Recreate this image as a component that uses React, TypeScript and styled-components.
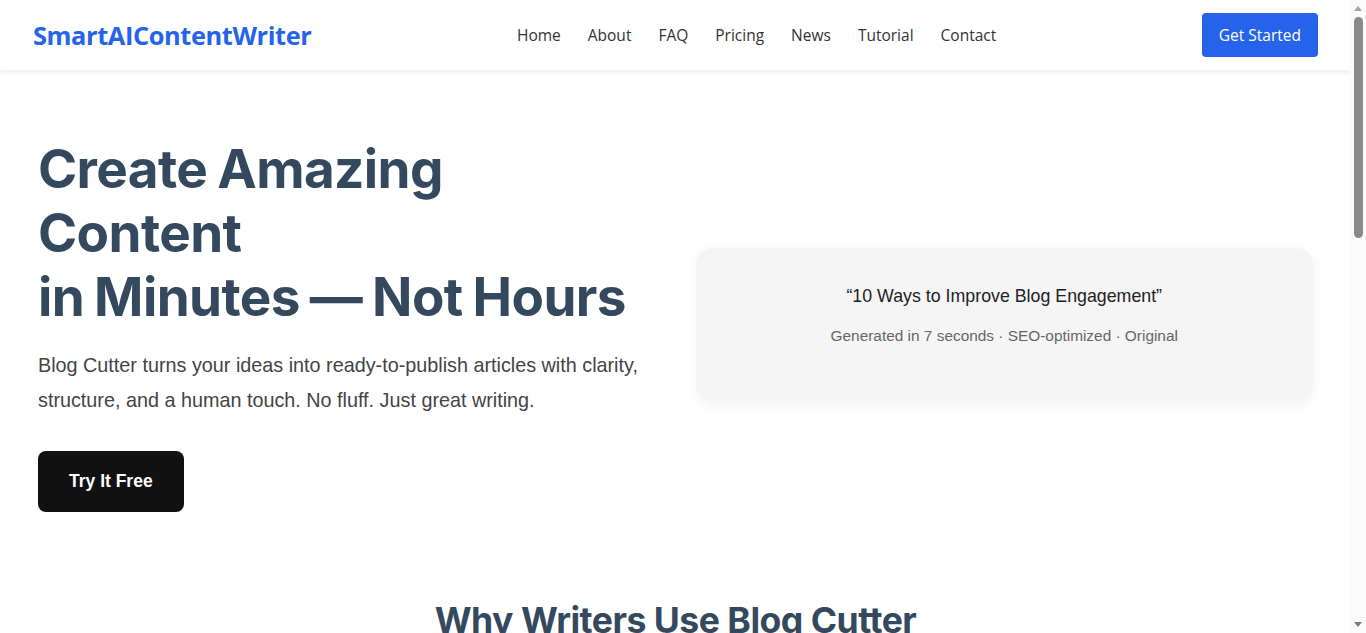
import React from "react";
import styled, { createGlobalStyle } from "styled-components";

const Global = createGlobalStyle`
  * { box-sizing: border-box; }
  html, body { margin: 0; padding: 0; background: #ffffff; }
  body { font-family: "Liberation Sans", Arial, sans-serif; color: #333; }
`;

const Page = styled.div`
  margin-right: 15px;
`;

const Header = styled.header`
  position: sticky;
  top: 0;
  z-index: 10;
  height: 70px;
  background: #fff;
  display: flex;
  align-items: center;
  justify-content: space-between;
  padding: 0 33px;
  box-shadow: 0 2px 6px rgba(0, 0, 0, 0.08);
  font-family: "Open Sans", "Noto Sans", sans-serif;
`;

const Logo = styled.a`
  font-size: 25.4px;
  font-weight: 700;
  color: #2563eb;
  text-decoration: none;
  letter-spacing: -0.4px;
`;

const Nav = styled.nav`
  display: flex;
  gap: 27px;
`;

const NavLink = styled.a`
  font-size: 15.5px;
  color: #333;
  text-decoration: none;
`;

const CtaButton = styled.a`
  display: inline-block;
  background: #2563eb;
  color: #fff;
  font-size: 15.5px;
  line-height: 22px;
  padding: 11px 17px;
  border-radius: 4px;
  text-decoration: none;
`;

const Hero = styled.section`
  display: grid;
  grid-template-columns: 1fr 1fr;
  gap: 40px;
  align-items: center;
  padding: 67px 38px 44px;
`;

const HeroText = styled.div`
  display: flex;
  flex-direction: column;
  align-items: flex-start;
`;

const Title = styled.h1`
  font-family: "Inter", sans-serif;
  font-size: 53px;
  line-height: 64px;
  font-weight: 700;
  letter-spacing: -0.6px;
  word-spacing: -2px;
  color: #34495e;
  margin: 0 0 19px;
`;

const Lead = styled.p`
  font-size: 19.8px;
  line-height: 35px;
  color: #444;
  margin: 0 0 33px;
`;

const TryButton = styled.a`
  display: inline-block;
  background: #111;
  color: #fff;
  font-weight: 700;
  font-size: 17.5px;
  line-height: 21px;
  padding: 20px 31px;
  border-radius: 8px;
  text-decoration: none;
`;

const Card = styled.div`
  background: #f5f5f5;
  border-radius: 16px;
  padding: 38px 40px 56px;
  text-align: center;
  box-shadow: 0 4px 14px rgba(0, 0, 0, 0.05);
`;

const CardTitle = styled.p`
  font-size: 17.8px;
  line-height: 21px;
  color: #222;
  margin: 0 0 20px;
`;

const CardMeta = styled.p`
  font-size: 15.4px;
  line-height: 18px;
  color: #666;
  margin: 0;
`;

const Section = styled.section`
  padding: 43px 38px 80px;
  text-align: center;
`;

const SectionTitle = styled.h2`
  font-family: "Inter", sans-serif;
  font-size: 35.6px;
  line-height: 44px;
  font-weight: 700;
  letter-spacing: -0.5px;
  color: #34495e;
  margin: 0 0 40px;
`;

const Features = styled.div`
  display: grid;
  grid-template-columns: repeat(3, 1fr);
  gap: 32px;
`;

const Feature = styled.div`
  background: #f5f5f5;
  border-radius: 16px;
  padding: 32px;
  text-align: left;
`;

const FeatureTitle = styled.h3`
  font-size: 20px;
  color: #34495e;
  margin: 0 0 12px;
`;

const FeatureText = styled.p`
  font-size: 16px;
  line-height: 1.6;
  color: #555;
  margin: 0;
`;

const ScrollTrack = styled.div`
  position: fixed;
  top: 0;
  right: 0;
  width: 15px;
  height: 100vh;
  background: #fafafa;
  z-index: 20;
`;

const ScrollThumb = styled.div`
  position: absolute;
  top: 17px;
  left: 3px;
  width: 9px;
  height: 221px;
  border-radius: 5px;
  background: #8a8a8a;
`;

const ScrollArrow = styled.div<{ $down?: boolean }>`
  position: absolute;
  left: 3px;
  ${(p) => (p.$down ? "bottom: 6px;" : "top: 6px;")}
  width: 0;
  height: 0;
  border-left: 4.5px solid transparent;
  border-right: 4.5px solid transparent;
  ${(p) => (p.$down ? "border-top: 5px solid #7a7a7a;" : "border-bottom: 5px solid #a3a3a3;")}
`;

const navItems = ["Home", "About", "FAQ", "Pricing", "News", "Tutorial", "Contact"];

const features = [
  { t: "Fast drafts", d: "Turn a topic into a structured article in seconds, ready for your final edit." },
  { t: "SEO built in", d: "Headings, keywords and meta descriptions are shaped for search from the start." },
  { t: "Human tone", d: "Clear, natural writing that sounds like you — not like a machine." },
];

export default function App() {
  return (
    <>
      <Global />
      <Page>
        <Header>
          <Logo href="#">SmartAIContentWriter</Logo>
          <Nav>
            {navItems.map((n) => (
              <NavLink key={n} href="#">{n}</NavLink>
            ))}
          </Nav>
          <CtaButton href="#">Get Started</CtaButton>
        </Header>
        <Hero>
          <HeroText>
            <Title>
              Create Amazing Content
              <br />
              in Minutes — Not Hours
            </Title>
            <Lead>
              Blog Cutter turns your ideas into ready-to-publish articles with clarity, structure, and a human touch. No fluff. Just great writing.
            </Lead>
            <TryButton href="#">Try It Free</TryButton>
          </HeroText>
          <Card>
            <CardTitle>“10 Ways to Improve Blog Engagement”</CardTitle>
            <CardMeta>Generated in 7 seconds · SEO-optimized · Original</CardMeta>
          </Card>
        </Hero>
        <Section>
          <SectionTitle>Why Writers Use Blog Cutter</SectionTitle>
          <Features>
            {features.map((f) => (
              <Feature key={f.t}>
                <FeatureTitle>{f.t}</FeatureTitle>
                <FeatureText>{f.d}</FeatureText>
              </Feature>
            ))}
          </Features>
        </Section>
      </Page>
      <ScrollTrack aria-hidden>
        <ScrollArrow />
        <ScrollThumb />
        <ScrollArrow $down />
      </ScrollTrack>
    </>
  );
}
